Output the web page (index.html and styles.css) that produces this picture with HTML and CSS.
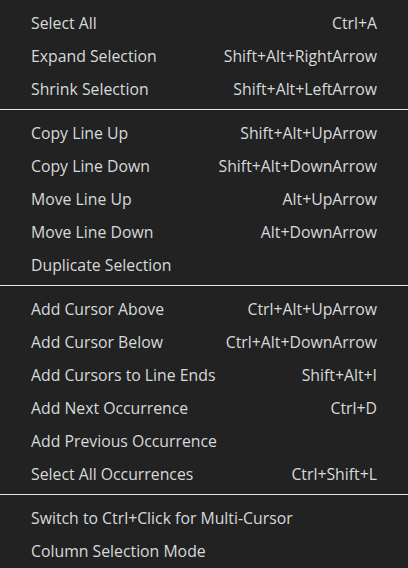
FILE: index.html
```html
<!DOCTYPE html>
<html>
<head>
<meta charset="utf-8">
<link rel="stylesheet" href="styles.css">
</head>
<body>
<div class="menu">
  <div class="item"><span class="label">Select All</span><span class="key">Ctrl+A</span></div>
  <div class="item"><span class="label">Expand Selection</span><span class="key">Shift+Alt+RightArrow</span></div>
  <div class="item"><span class="label">Shrink Selection</span><span class="key">Shift+Alt+LeftArrow</span></div>
  <div class="sep"></div>
  <div class="item"><span class="label">Copy Line Up</span><span class="key">Shift+Alt+UpArrow</span></div>
  <div class="item"><span class="label">Copy Line Down</span><span class="key">Shift+Alt+DownArrow</span></div>
  <div class="item"><span class="label">Move Line Up</span><span class="key">Alt+UpArrow</span></div>
  <div class="item"><span class="label">Move Line Down</span><span class="key">Alt+DownArrow</span></div>
  <div class="item"><span class="label">Duplicate Selection</span></div>
  <div class="sep"></div>
  <div class="item"><span class="label">Add Cursor Above</span><span class="key">Ctrl+Alt+UpArrow</span></div>
  <div class="item"><span class="label">Add Cursor Below</span><span class="key">Ctrl+Alt+DownArrow</span></div>
  <div class="item"><span class="label">Add Cursors to Line Ends</span><span class="key">Shift+Alt+I</span></div>
  <div class="item"><span class="label">Add Next Occurrence</span><span class="key">Ctrl+D</span></div>
  <div class="item"><span class="label">Add Previous Occurrence</span></div>
  <div class="item"><span class="label">Select All Occurrences</span><span class="key">Ctrl+Shift+L</span></div>
  <div class="sep"></div>
  <div class="item"><span class="label">Switch to Ctrl+Click for Multi-Cursor</span></div>
  <div class="item"><span class="label">Column Selection Mode</span></div>
</div>
</body>
</html>
```
FILE: styles.css
```css
html, body {
  margin: 0;
  padding: 0;
  background: #222222;
}
body {
  width: 408px;
  height: 568px;
  overflow: hidden;
  font-family: "Open Sans", "Noto Sans", sans-serif;
  font-size: 15.8px;
  color: #d6dada;
}
.menu {
  padding-top: 5px;
  display: flex;
  flex-direction: column;
}
.item {
  box-sizing: border-box;
  height: 33px;
  padding: 2px 31px 0;
  display: flex;
  align-items: center;
  justify-content: space-between;
  white-space: nowrap;
}
.sep {
  height: 1px;
  margin: 5px 0;
  background: #e6e6e6;
}
```
